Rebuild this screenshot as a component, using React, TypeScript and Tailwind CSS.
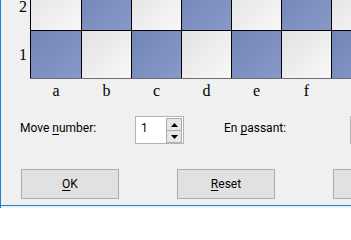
const files = ['a', 'b', 'c', 'd', 'e', 'f', 'g']
const ranks = [2, 1]

const ui = { fontFamily: '"Segoe UI", Roboto, sans-serif' }
const serif = { fontFamily: '"Liberation Serif", "Times New Roman", serif' }

function Square({ dark, first }: { dark: boolean; first: boolean }) {
  return (
    <div
      className={
        'h-[48px] shrink-0 border-l border-t border-black bg-linear-to-br ' +
        (first ? 'w-[51px] ' : 'w-[50px] ') +
        (dark ? 'from-[#7186b6] to-[#8899c9]' : 'from-[#e2e2e2] to-[#f8f8f8]')
      }
    />
  )
}

function SpinArrow({ up }: { up: boolean }) {
  return (
    <svg width="7" height="4" viewBox="0 0 7 4">
      <path d={up ? 'M0 4 L3.5 0 L7 4 Z' : 'M0 0 L3.5 4 L7 0 Z'} fill="#000" />
    </svg>
  )
}

function DlgButton({ children }: { children: React.ReactNode }) {
  return (
    <button className="h-[30px] w-[98px] shrink-0 border border-[#adadad] bg-[#e1e1e1] text-[12px] leading-[16px] text-black">
      {children}
    </button>
  )
}

export default function App() {
  return (
    <div className="flex h-[208px] w-[351px] flex-col overflow-hidden border-l border-[#1883d7] bg-[#f0f0f0]" style={ui}>
      {/* board */}
      <div className="mt-[-18px] flex shrink-0">
        <div className="w-[29px] shrink-0">
          {ranks.map((r) => (
            <div key={r} className="flex h-[48px] items-center justify-end pr-[3px] pt-px text-[16px] leading-[18px] text-black" style={serif}>
              {r}
            </div>
          ))}
        </div>
        <div className="flex-1">
          {ranks.map((r) => (
            <div key={r} className="flex">
              {files.map((f, i) => (
                <Square key={f} first={i === 0} dark={(i + r) % 2 === 1} />
              ))}
            </div>
          ))}
          <div className="h-px bg-[#6e6e6e]" />
        </div>
      </div>

      {/* file labels */}
      <div className="ml-[29px] flex shrink-0 pt-[3px]">
        {files.slice(0, 6).map((f, i) => (
          <div key={f} className={(i === 0 ? 'w-[51px] pl-px ' : 'w-[50px] pl-px ') + 'shrink-0 text-center text-[16px] leading-[18px] text-black'} style={serif}>
            {f}
          </div>
        ))}
      </div>

      {/* fields */}
      <div className="mt-[16px] flex h-[28px] shrink-0 items-start">
        <div className="w-[134px] shrink-0 pl-[19px] pt-[4px] text-[12px] leading-[16px] text-black">
          Move <u className="underline-offset-[2px]">n</u>umber:
        </div>
        <div className="flex h-[28px] w-[49px] shrink-0 border border-[#b4b4b4] bg-white">
          <div className="flex-1 pl-[5px] pt-[3px] text-[12px] leading-[16px] text-black">1</div>
          <div className="mr-px mt-px flex w-[16px] flex-col">
            <div className="flex h-[13px] items-center justify-center border border-[#adadad] bg-[#e6e6e6]">
              <SpinArrow up />
            </div>
            <div className="flex h-[12px] items-center justify-center border border-t-0 border-[#adadad] bg-[#e6e6e6]">
              <SpinArrow up={false} />
            </div>
          </div>
        </div>
        <div className="ml-[40px] w-[126px] shrink-0 pt-[4px] text-[12px] leading-[16px] text-black">
          En <u className="underline-offset-[2px]">p</u>assant:
        </div>
        <div className="h-[28px] w-[60px] shrink-0 border border-[#b4b4b4] bg-white" />
      </div>

      {/* buttons */}
      <div className="ml-[20px] mt-[25px] flex shrink-0 gap-[58px]">
        <DlgButton>
          <u className="underline-offset-[2px]">O</u>K
        </DlgButton>
        <DlgButton>
          <u className="underline-offset-[2px]">R</u>eset
        </DlgButton>
        <DlgButton>Cancel</DlgButton>
      </div>

      <div className="mt-[6px] h-px shrink-0 bg-[#1883d7]" />
    </div>
  )
}
